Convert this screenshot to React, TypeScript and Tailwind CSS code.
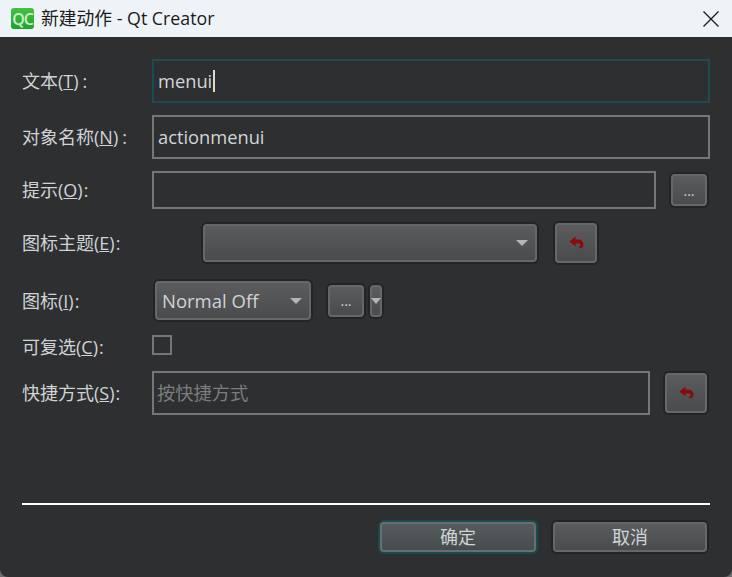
import type { ReactNode } from "react";

const font = "[font-family:'Open_Sans','Noto_Sans_CJK_SC',sans-serif]";

function Label({ text, hot, width = "w-[130px]", colon = "ml-[1px]" }: { text: string; hot: string; width?: string; colon?: string }) {
  return (
    <label className={`${width} shrink-0 text-[18px] leading-6 text-[#cfd3d6]`}>
      {text}(<u>{hot}</u>)<span className={colon}>:</span>
    </label>
  );
}

function Caret({ className = "border-x-[6px]" }: { className?: string }) {
  return <span className={`h-0 w-0 shrink-0 border-t-[6px] border-x-transparent border-t-[#b4b5b6] ${className}`} />;
}

function Undo() {
  return (
    <svg className="-mt-[2px] ml-[1px]" width="15" height="13" viewBox="0 0 15 13" fill="none">
      <path d="M0.5 5.5 L6.5 0.5 V3.5 H9 C12 3.5 14.5 5.5 14.5 8.5 C14.5 10.5 13.5 12 11.5 12.5 L9.5 11 C11 10.5 11.5 10 11.5 9 C11.5 8 10.5 7.5 9 7.5 H6.5 V10.5 Z" fill="#8b0a0a" />
    </svg>
  );
}

function Btn({ className, children, focused = false }: { className: string; children?: ReactNode; focused?: boolean }) {
  const tone = focused
    ? "border-[#66706f] from-[#565c5e] to-[#464c4e] shadow-[0_0_0_2px_#1b4b50]"
    : "border-[#666768] from-[#5b5c5d] to-[#4a4b4c] shadow-[0_0_0_2px_#232425]";
  return (
    <button className={`flex shrink-0 items-center rounded-[4px] border-2 bg-gradient-to-b text-[#cfd3d6] ${tone} ${className}`}>
      {children}
    </button>
  );
}

function Field({ className, children, tone = "border-[#757677] text-[#d2d5d8]" }: { className: string; children?: ReactNode; tone?: string }) {
  return <div className={`flex items-center border-2 pl-1 text-[18.3px] ${tone} ${className}`}>{children}</div>;
}

export default function App() {
  return (
    <div className="h-[577px] w-[732px] bg-[#6a6b6c]">
      <div className={`flex h-full flex-col overflow-hidden rounded-b-[8px] bg-[#2e2f30] ${font}`}>
        {/* Title bar */}
        <div className="flex h-[37px] shrink-0 items-center bg-[#eef3f8] pl-[11px] pr-[13px]">
          <div className="flex h-[21px] w-[23px] items-center justify-center rounded-[3px] bg-gradient-to-b from-[#45c046] to-[#1fa32c] text-[16px] font-semibold tracking-[-1px] text-[#c9efc6]">
            QC
          </div>
          <span className="ml-[7px] text-[17.8px] text-[#1b1b1b]">新建动作 - Qt Creator</span>
          <svg className="ml-auto" width="16" height="16" viewBox="0 0 16 16" stroke="#1a1a1a" strokeWidth="1.3">
            <path d="M0.5 0.5 L15.5 15.5 M15.5 0.5 L0.5 15.5" />
          </svg>
        </div>

        {/* Form */}
        <div className="flex flex-col px-[22px]">
          <div className="mt-[22px] flex items-center">
            <Label text="文本" hot="T" colon="ml-[4px]" />
            <Field className="h-[44px] flex-1" tone="border-[#1c4b50] text-[#d2d5d8]">
              <span>menui</span>
              <span className="ml-[1px] h-[22px] w-[2px] bg-[#d8d8d8]" />
            </Field>
          </div>
          <div className="mt-[12px] flex items-center">
            <Label text="对象名称" hot="N" colon="ml-[4px]" />
            <Field className="h-[44px] flex-1">actionmenui</Field>
          </div>
          <div className="mt-[12px] flex items-center">
            <Label text="提示" hot="O" />
            <Field className="h-[38px] w-[504px]" />
            <Btn className="ml-[15px] h-[32px] w-[36px] justify-center text-[14px]">...</Btn>
          </div>
          <div className="mt-[14px] flex items-center">
            <Label text="图标主题" hot="E" width="w-[181px]" />
            <Btn className="h-[38px] w-[334px] justify-end pr-[7px]">
              <Caret />
            </Btn>
            <Btn className="ml-[18px] h-[40px] w-[42px] justify-center">
              <Undo />
            </Btn>
          </div>
          <div className="mt-[18px] flex items-center">
            <Label text="图标" hot="I" width="w-[133px]" />
            <Btn className="h-[39px] w-[156px] justify-between pl-[5px] pr-[7px] text-[18.5px]">
              <span>Normal Off</span>
              <Caret />
            </Btn>
            <Btn className="ml-[17px] h-[32px] w-[36px] justify-center text-[14px]">...</Btn>
            <Btn className="ml-[6px] h-[32px] w-[12px] justify-center">
              <Caret className="border-x-[5px]" />
            </Btn>
          </div>
          <div className="mt-[14px] flex h-[26px] items-center">
            <Label text="可复选" hot="C" />
            <span className="-mt-[4px] h-[20px] w-[20px] border-2 border-[#757677]" />
          </div>
          <div className="mt-[11px] flex items-center">
            <Label text="快捷方式" hot="S" />
            <Field className="h-[44px] w-[498px] pl-[3px]" tone="border-[#757677] text-[#7c7d7e]">按快捷方式</Field>
            <Btn className="ml-[15px] h-[40px] w-[42px] justify-center">
              <Undo />
            </Btn>
          </div>
        </div>

        {/* Footer */}
        <div className="mx-[22px] mt-[88px] h-[2px] shrink-0 bg-white" />
        <div className="mr-[25px] mt-[17px] flex justify-end gap-[17px]">
          <Btn focused className="h-[30px] w-[156px] justify-center text-[18px]">确定</Btn>
          <Btn className="h-[30px] w-[154px] justify-center text-[18px]">取消</Btn>
        </div>
      </div>
    </div>
  );
}
